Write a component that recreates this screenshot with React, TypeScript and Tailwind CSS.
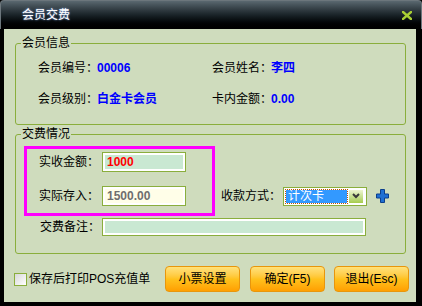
import React from 'react';

const font = "font-['Liberation_Sans','Noto_Sans_CJK_SC',sans-serif]";

const Plus: React.FC = () => (
  <svg width="13" height="14" viewBox="0 0 13 14" className="shrink-0">
    <path
      d="M4.5 0.5h4v4.5h4v4h-4v4.5h-4v-4.5h-4v-4h4z"
      fill="#1f6fd2"
      stroke="#0b3f8c"
      strokeWidth="1"
    />
  </svg>
);

const Btn: React.FC<{ label: string; className?: string }> = ({ label, className = '' }) => (
  <div
    className={`w-[75px] h-[26px] shrink-0 flex items-center justify-center rounded-[4px] border border-[#e8960c] bg-linear-to-b from-[#ffe27a] via-[#ffc21c] to-[#ff9f00] text-black ${className}`}
  >
    {label}
  </div>
);

export default function App() {
  return (
    <div className={`w-[422px] h-[306px] overflow-hidden whitespace-nowrap bg-black flex flex-col text-[12px] leading-[16px] text-black ${font}`}>
      {/* title bar */}
      <div className="h-[29px] shrink-0 flex items-center justify-between rounded-t-[4px] border border-[#6c767c] border-b-0 bg-linear-to-b from-[#5a6870] via-[#1a2328] to-[#000000] pl-[21px] pr-[9px]">
        <span className="text-white [text-shadow:0_0_2px_#8fb4ff]">会员交费</span>
        <svg width="10" height="9" viewBox="0 0 10 9">
          <path d="M1 1l8 7M9 1l-8 7" stroke="#a9d034" strokeWidth="2.4" strokeLinecap="square" />
        </svg>
      </div>

      {/* body */}
      <div className="flex-1 min-h-0 ml-[4px] mr-[6px] mb-[4px] bg-[#cfdcbd] flex flex-col pt-[6px] pl-[11px]">
        {/* 会员信息 */}
        <fieldset className="border border-[#8aae3c] rounded-[3px] mr-[10px] p-0">
          <legend className="ml-[5px] px-[1px] h-[16px]">会员信息</legend>
          <div className="pl-[22px] pt-[9px] pb-[17px] flex flex-col gap-[15px]">
            <div className="flex">
              <div className="w-[174px] flex">
                <span className="w-[59px] shrink-0">会员编号：</span>
                <span className="font-bold text-[#0000ff]">00006</span>
              </div>
              <div className="flex">
                <span className="w-[59px] shrink-0">会员姓名：</span>
                <span className="font-bold text-[#0000ff]">李四</span>
              </div>
            </div>
            <div className="flex">
              <div className="w-[174px] flex">
                <span className="w-[59px] shrink-0">会员级别：</span>
                <span className="font-bold text-[#0000ff]">白金卡会员</span>
              </div>
              <div className="flex">
                <span className="w-[59px] shrink-0">卡内金额：</span>
                <span className="font-bold text-[#0000ff]">0.00</span>
              </div>
            </div>
          </div>
        </fieldset>

        {/* 交费情况 */}
        <fieldset className="border border-[#8aae3c] rounded-[3px] mr-[10px] mt-[1px] p-0">
          <legend className="ml-[5px] px-[1px] h-[16px]">交费情况</legend>
          <div className="pl-[8px] pt-[4px] pb-[17px] flex flex-col">
            <div className="flex items-end">
              <div className="w-[191px] h-[70px] shrink-0 border-[3px] border-[#ff00ff] flex flex-col pl-[12px] pt-[3px]">
                <div className="flex items-center h-[20px]">
                  <span className="w-[63px] shrink-0">实收金额：</span>
                  <div className="w-[84px] h-[20px] border border-[#8aae3c] p-[2px] bg-white">
                    <div className="h-full bg-[#c9e8d2] pl-[2px] flex items-center font-bold text-[#ff0000]">1000</div>
                  </div>
                </div>
                <div className="flex items-center h-[20px] mt-[14px]">
                  <span className="w-[63px] shrink-0">实际存入：</span>
                  <div className="w-[84px] h-[20px] border border-[#8aae3c] p-[2px] bg-white">
                    <div className="h-full bg-[#fffee8] pl-[2px] flex items-center font-bold text-[#6e6e6e]">1500.00</div>
                  </div>
                </div>
              </div>

              <div className="flex items-center h-[20px] ml-[6px] mb-[10px]">
                <span className="w-[62px] shrink-0">收款方式：</span>
                <div className="w-[84px] h-[19px] shrink-0 border border-[#8aae3c] bg-white flex items-center p-[2px] gap-[1px]">
                  <div className="flex-1 h-[13px] bg-[#3399ff] outline-1 outline-dotted outline-[#c05000] text-white flex items-center pl-[2px] leading-[13px]">
                    计次卡
                  </div>
                  <div className="w-[16px] h-[15px] border border-white bg-linear-to-b from-[#eef5d0] to-[#a6cc4a] flex items-center justify-center">
                    <svg width="8" height="6" viewBox="0 0 8 6">
                      <path d="M1 1l3 3 3-3" stroke="#3a3a3a" strokeWidth="2" fill="none" />
                    </svg>
                  </div>
                </div>
                <div className="ml-[9px]">
                  <Plus />
                </div>
              </div>
            </div>

            <div className="flex items-center mt-[2px] pl-[16px]">
              <span className="w-[62px] shrink-0">交费备注：</span>
              <div className="w-[264px] h-[18px] border border-[#8aae3c] p-[2px] bg-white">
                <div className="h-full bg-[#c9e8d2]" />
              </div>
            </div>
          </div>
        </fieldset>

        {/* bottom bar */}
        <div className="flex items-center mt-[12px] pr-[7px] -ml-[1px]">
          <div className="w-[13px] h-[13px] shrink-0 border border-[#8aae3c] bg-linear-to-br from-[#d8d8d8] to-white" />
          <span className="ml-[2px]">保存后打印POS充值单</span>
          <Btn label="小票设置" className="ml-auto" />
          <Btn label="确定(F5)" className="ml-[10px]" />
          <Btn label="退出(Esc)" className="ml-[9px]" />
        </div>
      </div>
    </div>
  );
}
